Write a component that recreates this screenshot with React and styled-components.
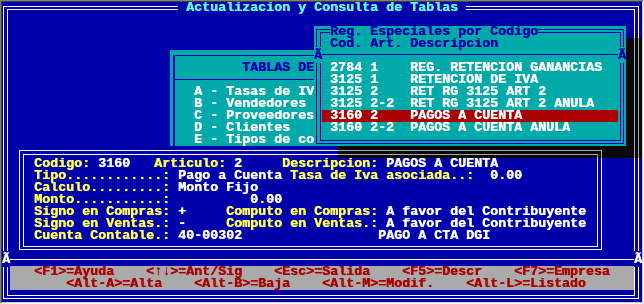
import React from 'react';
import styled, { createGlobalStyle } from 'styled-components';

const colors = {
  blue: '#0000aa',
  cyan: '#00aaaa',
  white: '#ffffff',
  yellow: '#ffff55',
  brightCyan: '#55ffff',
  red: '#aa0000',
  gray: '#aaaaaa',
};

const GlobalStyle = createGlobalStyle`
  html, body {
    margin: 0;
    padding: 0;
    background: #ffffff;
  }
  body {
    font-family: "Liberation Mono", "DejaVu Sans Mono", monospace;
    font-size: 13.33px;
    font-weight: 700;
    line-height: 12px;
    text-shadow: 0.5px 0 0 currentColor;
  }
`;

const Bezel = styled.div`
  width: 644px;
  height: 304px;
  box-sizing: border-box;
  border: 1px solid;
  border-color: #808080 #ffffff #ffffff #808080;
`;

const Screen = styled.div`
  position: relative;
  height: 100%;
  box-sizing: border-box;
  border: 1px solid;
  border-color: #404040 #d4d0c8 #d4d0c8 #404040;
  background: ${colors.blue};
  padding: 4px 3px 3px 1px;
`;

const MainFrame = styled.div`
  height: 100%;
  box-sizing: border-box;
  border: 1px solid ${colors.white};
  display: flex;
`;

const MainInner = styled.div`
  flex: 1;
  margin: 2px 3px;
  border: 1px solid ${colors.white};
  padding: 140px 0 5px 0;
  display: flex;
  flex-direction: column;
`;

const ScreenTitle = styled.div`
  position: absolute;
  left: 176px;
  top: 0;
  height: 12px;
  background: ${colors.blue};
  color: ${colors.brightCyan};
  white-space: pre;
`;

/* ---- detail panel ---- */

const DetailsWindow = styled.div`
  margin-left: 11px;
  width: 583px;
  height: 100px;
  box-sizing: border-box;
  border: 1px solid ${colors.white};
  display: flex;
`;

const DetailsInner = styled.div`
  flex: 1;
  margin: 3px 3px 2px 3px;
  border: 1px solid ${colors.white};
  padding: 3px 0 0 10px;
`;

const Line = styled.div`
  height: 12px;
  white-space: pre;
  color: ${colors.white};
`;

const Label = styled.span`
  color: ${colors.yellow};
`;

const Separator = styled.div`
  position: relative;
  margin-top: ${(p) => p.$gap ?? 4}px;
  height: 12px;

  &::before {
    content: '';
    position: absolute;
    left: 0;
    right: 0;
    top: ${(p) => p.$lineTop || 5}px;
    height: 1px;
    background: ${(p) => p.$color || colors.white};
  }
`;

const Junction = styled.span`
  position: absolute;
  top: -3px;
  ${(p) => (p.$side === 'right' ? `right: ${p.$offset}px;` : `left: ${p.$offset}px;`)}
  width: 8px;
  height: 16px;
  padding-top: 3px;
  box-sizing: border-box;
  background: ${(p) => p.$bg};
  color: ${(p) => p.$color};
  line-height: 12px;
`;

const KeyBar = styled.div`
  margin-left: 2px;
  height: 24px;
  background: ${colors.gray};
  color: ${colors.red};
`;

const KeyLine = styled.div`
  height: 12px;
  white-space: pre;
`;

/* ---- tablas menu (behind) ---- */

const TablasWindow = styled.div`
  position: absolute;
  left: 168px;
  top: 48px;
  width: 200px;
  height: 96px;
  overflow: hidden;
  background: ${colors.cyan};
  color: ${colors.blue};
`;

const TablasFrame = styled.div`
  height: 100%;
  margin: 5px 0 0 3px;
  border-left: 2px solid ${colors.blue};
  border-top: 1px solid ${colors.blue};
`;

const TablasHeader = styled.div`
  height: 12px;
  padding: 6px 0 5px 67px;
  border-bottom: 1px solid ${colors.blue};
  white-space: pre;
`;

const TablasList = styled.div`
  padding: 6px 0 0 19px;
  color: ${colors.white};
`;

const TablasItem = styled.div`
  height: 12px;
  white-space: pre;
`;

/* ---- codes list (front) ---- */

const ListWindow = styled.div`
  position: absolute;
  left: 312px;
  top: 24px;
  width: 312px;
  height: 120px;
  background: ${colors.cyan};
  color: ${colors.blue};
  display: flex;

  &::before,
  &::after {
    content: '';
    position: absolute;
    backdrop-filter: grayscale(1) brightness(0.66);
  }
  &::before {
    left: 100%;
    top: 12px;
    width: 16px;
    height: 120px;
  }
  &::after {
    left: 24px;
    top: 100%;
    width: 288px;
    height: 12px;
  }
`;

const ListOuter = styled.div`
  flex: 1;
  margin: 3px 2px 2px 2px;
  border: 1px solid ${colors.blue};
  display: flex;
`;

const ListInner = styled.div`
  flex: 1;
  margin: 2px 2px 2px 3px;
  border: 1px solid ${colors.blue};
  padding-top: 5px;
`;

const ListTitle = styled.div`
  position: absolute;
  left: 16px;
  top: 0;
  height: 12px;
  background: ${colors.cyan};
  white-space: pre;
`;

const ListHeader = styled.div`
  height: 12px;
  padding-left: 9px;
  white-space: pre;
`;

const ListRow = styled.div`
  height: 12px;
  margin: 0 2px 0 1px;
  padding-left: 8px;
  white-space: pre;
  color: ${colors.white};
  background: ${(p) => (p.$selected ? colors.red : 'transparent')};
`;

const codes = [
  ['2784', '1', 'REG. RETENCION GANANCIAS'],
  ['3125', '1', 'RETENCION DE IVA'],
  ['3125', '2', 'RET RG 3125 ART 2'],
  ['3125', '2-2', 'RET RG 3125 ART 2 ANULA'],
  ['3160', '2', 'PAGOS A CUENTA'],
  ['3160', '2-2', 'PAGOS A CUENTA ANULA'],
];

const tablas = [
  'A - Tasas de IVA',
  'B - Vendedores',
  'C - Proveedores',
  'D - Clientes',
  'E - Tipos de comprobantes',
];

const App = () => {
  return (
    <>
      <GlobalStyle />
      <Bezel>
        <Screen>
          <MainFrame>
            <MainInner>
              <DetailsWindow>
                <DetailsInner>
                  <Line>
                    <Label>Codigo: </Label>3160   <Label>Articulo: </Label>2     <Label>Descripcion: </Label>PAGOS A CUENTA
                  </Line>
                  <Line>
                    <Label>Tipo............: </Label>Pago a Cuenta <Label>Tasa de Iva asociada..: </Label> 0.00
                  </Line>
                  <Line>
                    <Label>Calculo.........: </Label>Monto Fijo
                  </Line>
                  <Line>
                    <Label>Monto...........: </Label>{'         0.00'}
                  </Line>
                  <Line>
                    <Label>Signo en Compras: </Label>+     <Label>Computo en Compras: </Label>A favor del Contribuyente
                  </Line>
                  <Line>
                    <Label>Signo en Ventas.: </Label>-     <Label>Computo en Ventas.: </Label>A favor del Contribuyente
                  </Line>
                  <Line>
                    <Label>Cuenta Contable.: </Label>{'40-00302                 PAGO A CTA DGI'}
                  </Line>
                </DetailsInner>
              </DetailsWindow>

              <Separator>
                <Junction $offset={-6} $bg={colors.blue} $color={colors.white}>Ã</Junction>
                <Junction $side="right" $offset={-8} $bg={colors.blue} $color={colors.white}>Ã</Junction>
              </Separator>

              <KeyBar>
                <KeyLine>{'   <F1>=Ayuda    <↑↓>=Ant/Sig    <Esc>=Salida    <F5>=Descr    <F7>=Empresa'}</KeyLine>
                <KeyLine>{'       <Alt-A>=Alta    <Alt-B>=Baja    <Alt-M>=Modif.    <Alt-L>=Listado'}</KeyLine>
              </KeyBar>
            </MainInner>
          </MainFrame>

          <ScreenTitle>{' Actualizacion y Consulta de Tablas '}</ScreenTitle>

          <TablasWindow>
            <TablasFrame>
              <TablasHeader>TABLAS DEL SISTEMA</TablasHeader>
              <TablasList>
                {tablas.map((t) => (
                  <TablasItem key={t}>{t}</TablasItem>
                ))}
              </TablasList>
            </TablasFrame>
          </TablasWindow>

          <ListWindow>
            <ListOuter>
              <ListInner>
                <ListHeader>Cod. Art. Descripcion</ListHeader>
                <Separator $gap={0} $lineTop={4} $color={colors.blue}>
                  <Junction $offset={-7} $bg={colors.cyan} $color={colors.blue}>Ã</Junction>
                  <Junction $side="right" $offset={-6} $bg={colors.cyan} $color={colors.blue}>Ã</Junction>
                </Separator>
                {codes.map(([code, art, desc], i) => (
                  <ListRow key={code + art} $selected={i === 4}>
                    {`${code} ${art.padEnd(4)} ${desc}`}
                  </ListRow>
                ))}
              </ListInner>
            </ListOuter>
            <ListTitle>Reg. Especiales por Codigo</ListTitle>
          </ListWindow>
        </Screen>
      </Bezel>
    </>
  );
};

export default App;
